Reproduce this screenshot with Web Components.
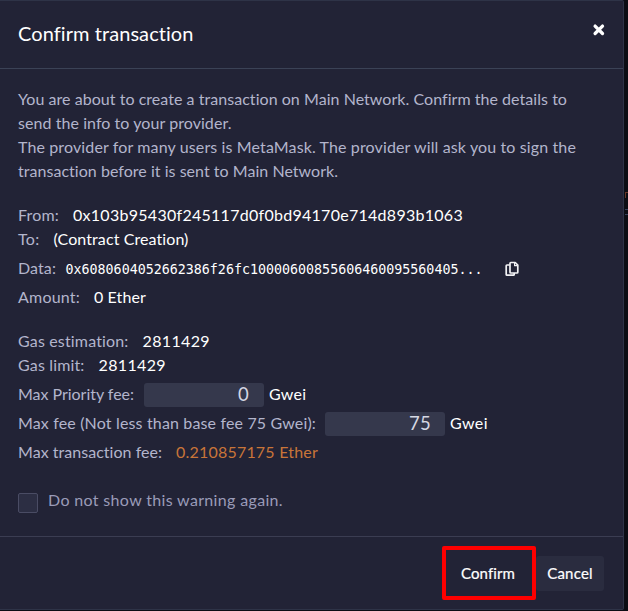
<!DOCTYPE html>
<html lang="en">
<head>
<meta charset="utf-8">
<title>Confirm transaction</title>
<style>
html,body{margin:0;height:100%;overflow:hidden;background:#0c0d14}
body{font-family:Lato,"Noto Sans",sans-serif;font-size:16px;line-height:24px;color:#b3b5cc}
</style>
</head>
<body>
<confirm-app></confirm-app>
<script>
// A run of text tracked out or in to fill the width given in its "w" attribute.
customElements.define('fit-text', class extends HTMLElement {
  constructor(){
    super();
    this.attachShadow({mode:'open'}).innerHTML = `<style>
      :host{display:inline-block;white-space:pre;flex:none;height:24px;line-height:22px;vertical-align:top}
      span{display:inline-block;font-variant-ligatures:none}</style><span></span>`;
  }
  connectedCallback(){
    const s = this.shadowRoot.querySelector('span'), w = +this.getAttribute('w');
    s.textContent = this.getAttribute('text');
    this.style.width = w + 'px';
    const n = s.getBoundingClientRect().width;
    s.style.letterSpacing = ((w - n) / s.textContent.length) + 'px';
  }
});

customElements.define('detail-row', class extends HTMLElement {
  constructor(){
    super();
    this.attachShadow({mode:'open'}).innerHTML = `<style>
      :host{display:flex;align-items:center;height:24px}
      :host([loose]){margin-top:5px}
      :host([group]){margin-top:20px}
      ::slotted(.v){color:#fff}
      ::slotted(.warn){color:#c97539}
      ::slotted(.code){color:#fff;font:13.33px/26px "DejaVu Sans Mono",monospace}
      </style><slot></slot>`;
  }
});

customElements.define('fee-input', class extends HTMLElement {
  constructor(){
    super();
    this.attachShadow({mode:'open'}).innerHTML = `<style>
      :host{display:flex;justify-content:flex-end;box-sizing:border-box;width:120px;height:24px;
        padding-right:14px;background:#35384c;border-radius:3px;color:#d5d7e3;font-size:18.5px;flex:none}
      </style><slot></slot>`;
  }
});

customElements.define('copy-icon', class extends HTMLElement {
  constructor(){
    super();
    this.attachShadow({mode:'open'}).innerHTML = `<style>:host{display:block;width:14px;height:16px;margin-left:22.5px}svg{display:block}</style>
      <svg width="14" height="16" viewBox="0 0 14 16" fill="none" stroke="#f2f2f5" stroke-width="1.7" stroke-linejoin="round">
      <path d="M4.8 4H2Q1.2 4 1.2 4.8V13.4Q1.2 14.2 2 14.2H8.4Q9.2 14.2 9.2 13.4V12"/>
      <path d="M5.8 1.5H10.2L12.8 4.1V11.2Q12.8 12 12 12H5.8Q5 12 5 11.2V2.3Q5 1.5 5.8 1.5Z"/>
      <path d="M9.6 1.8V4.7H12.5" stroke-width="1.2"/></svg>`;
  }
});

customElements.define('dialog-button', class extends HTMLElement {
  constructor(){
    super();
    this.attachShadow({mode:'open'}).innerHTML = `<style>
      :host{position:relative;display:flex;align-items:center;justify-content:center;box-sizing:border-box;
        height:35px;width:68px;border-radius:3px;background:#2a2c3f;color:#fff;font-size:15px;-webkit-text-stroke:.2px #fff}
      :host([marked]){width:96px;background:none;z-index:1}
      :host([marked])::after{content:"";position:absolute;left:2px;top:-10px;width:86px;height:46px;border:4px solid #fe0000;border-radius:2px}
      </style><slot></slot>`;
  }
});

customElements.define('confirm-app', class extends HTMLElement {
  constructor(){
    super();
    this.attachShadow({mode:'open'}).innerHTML = `<style>
      :host{display:flex;width:628px;height:611px;overflow:hidden}
      .modal{display:flex;flex-direction:column;box-sizing:border-box;width:624px;height:610px;background:#222336;
        border:solid #2e3347;border-width:1px 1px 1px 0;border-radius:0 2px 2px 0}
      header{display:flex;justify-content:space-between;box-sizing:border-box;height:68px;padding:21px 17.5px 0 18px;border-bottom:1px solid #3b4256;color:#fff;font-size:20px}
      header svg{display:block;margin-top:1px}
      main{box-sizing:border-box;height:467px;padding:19px 18px 0}
      .p{height:24px}
      .intro{margin-bottom:20px}
      .gap{margin-left:14px}
      label{display:flex;margin-top:24px;color:#9a9bb8}
      .box{box-sizing:border-box;width:20px;height:20px;margin:4px 10px 0 0;border:1px solid #4a4c64;border-radius:2px;background:#2c2e43}
      footer{display:flex;justify-content:flex-end;flex:1;box-sizing:border-box;padding:19px 19px 0;border-top:1px solid #3b3d52}
      aside{width:4px;overflow:hidden}
      aside i{display:block;width:3px;height:5px;margin:192px 0 0 1px;border:solid #653527;border-width:1px 0 0 1px}
      aside b{display:block;width:3px;height:4px;margin:11px 0 0 1px;border:solid #35405a;border-width:1px 0}
      </style>
      <div class="modal">
        <header><fit-text w="175.5" text="Confirm transaction"></fit-text>
          <svg width="14" height="14" viewBox="0 0 14 14" stroke="#fff" stroke-width="3.3" stroke-linecap="round"><path d="M3.1 3.1L10.5 10.5M10.5 3.1L3.1 10.5"/></svg></header>
        <main>
          <div class="intro">
            <div class="p"><fit-text w="549" text="You are about to create a transaction on Main Network. Confirm the details to"></fit-text></div>
            <div class="p"><fit-text w="213.5" text="send the info to your provider."></fit-text></div>
            <div class="p"><fit-text w="558" text="The provider for many users is MetaMask. The provider will ask you to sign the"></fit-text></div>
            <div class="p"><fit-text w="320" text="transaction before it is sent to Main Network."></fit-text></div>
          </div>
          <detail-row><fit-text w="41" text="From:"></fit-text><fit-text class="v gap" w="390" text="0x103b95430f245117d0f0bd94170e714d893b1063"></fit-text></detail-row>
          <detail-row><fit-text w="21.5" text="To:"></fit-text><fit-text class="v gap" w="135" text="(Contract Creation)"></fit-text></detail-row>
          <detail-row loose><fit-text w="38" text="Data:"></fit-text><fit-text class="code" style="margin-left:9.5px" w="417" text="0x6080604052662386f26fc10000600855606460095560405..."></fit-text><copy-icon></copy-icon></detail-row>
          <detail-row loose><fit-text w="62" text="Amount:"></fit-text><fit-text class="v gap" w="52" text="0 Ether"></fit-text></detail-row>
          <detail-row group><fit-text w="110.5" text="Gas estimation:"></fit-text><fit-text class="v gap" w="67.5" text="2811429"></fit-text></detail-row>
          <detail-row><fit-text w="66.5" text="Gas limit:"></fit-text><fit-text class="v gap" w="67.5" text="2811429"></fit-text></detail-row>
          <detail-row loose><fit-text w="116" text="Max Priority fee:"></fit-text><fee-input style="margin-left:10px"><fit-text w="12" text="0"></fit-text></fee-input><fit-text class="v" style="margin-left:5px" w="37.5" text="Gwei"></fit-text></detail-row>
          <detail-row loose><fit-text w="298" text="Max fee (Not less than base fee 75 Gwei):"></fit-text><fee-input style="margin-left:9px"><fit-text w="22" text="75"></fit-text></fee-input><fit-text class="v" style="margin-left:5px" w="38" text="Gwei"></fit-text></detail-row>
          <detail-row loose><fit-text w="144" text="Max transaction fee:"></fit-text><fit-text class="warn gap" w="142" text="0.210857175 Ether"></fit-text></detail-row>
          <label><span class="box"></span><fit-text w="235" text="Do not show this warning again."></fit-text></label>
        </main>
        <footer>
          <dialog-button marked><fit-text w="54" text="Confirm"></fit-text></dialog-button>
          <dialog-button><fit-text w="45.5" text="Cancel"></fit-text></dialog-button>
        </footer>
      </div>
      <aside><i></i><b></b></aside>`;
  }
});
</script>
</body>
</html>
